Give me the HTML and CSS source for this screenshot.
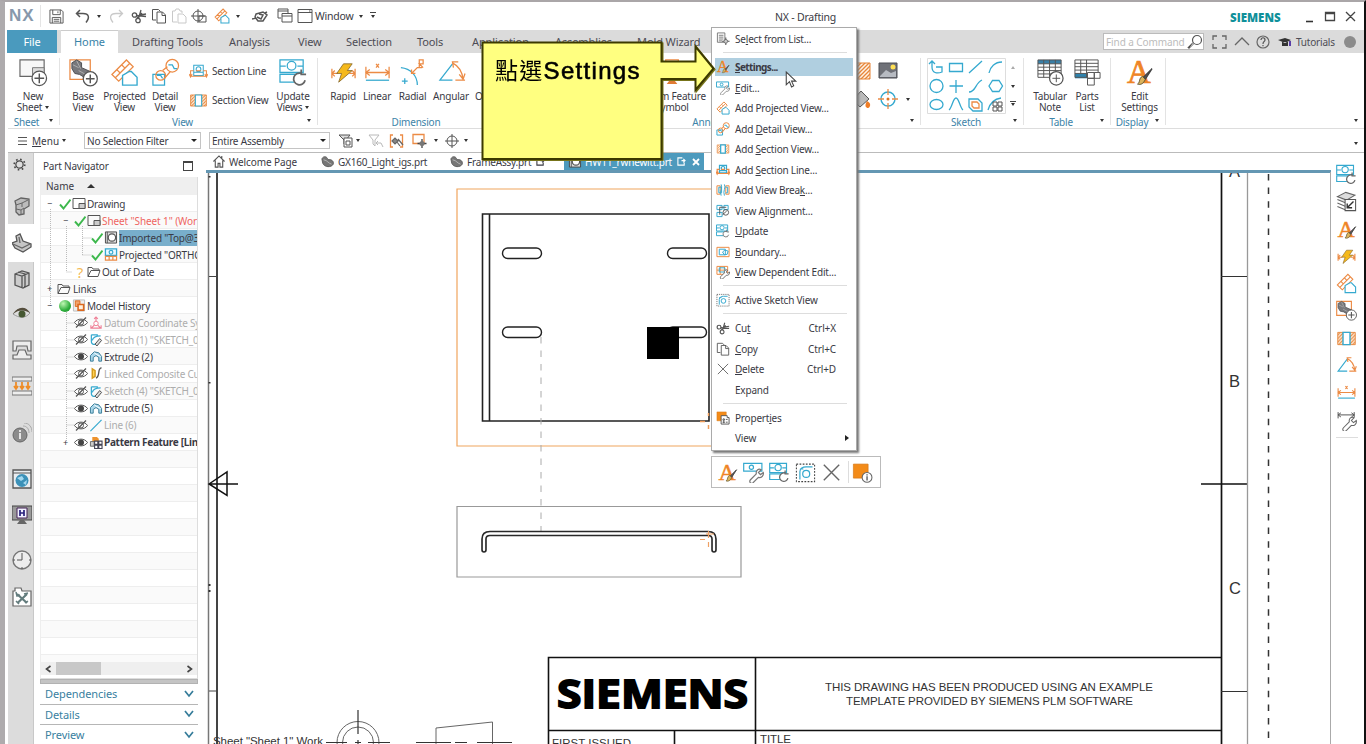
FILE: index.html
```html
<!DOCTYPE html>
<html lang="en">
<head>
<meta charset="utf-8">
<title>NX - Drafting</title>
<link rel="stylesheet" href="styles.css">
</head>
<body>
<svg class="defs" aria-hidden="true">
  <defs>
    <pattern id="hatch" width="4" height="4" patternUnits="userSpaceOnUse"><rect width="4" height="4" fill="#fff3e6"/><path d="M-1 5L5-1M-1 1L1-1M3 5L5 3" stroke="#e8863a" stroke-width="1.3"/></pattern>
  </defs>
  <symbol id="save" viewBox="0 0 16 16"><g class="k"><path d="M1 1h12l2 2v12H1z"/><path d="M4 1v5h8V1M3.500 15V9h9v6M5 11h6M5 13h6M9.500 2.500v2"/></g></symbol>
  <symbol id="undo" viewBox="0 0 16 16"><path class="k" d="M5 2L1.500 5.500 5 9M2 5.500h6c6 0 7 4 3 9" stroke-width="1.500"/></symbol>
  <symbol id="redo" viewBox="0 0 16 16"><path d="M11 2l3.500 3.500L11 9M14 5.500H8c-6 0-7 4-3 9" fill="none" stroke="#c9c9c9" stroke-width="1.300"/></symbol>
  <symbol id="cut" viewBox="0 0 16 16"><g class="k" stroke-width="1.300"><circle cx="3.500" cy="7" r="2.200"/><circle cx="7" cy="12.500" r="2.200"/><path d="M5.500 7.500L15 8.500M7.500 10.500L10 2M9 7l6-1M6 10L11 5"/></g></symbol>
  <symbol id="copy" viewBox="0 0 16 16"><g class="k"><path d="M5 12H1.500V1.500h6l2 2"/><path d="M6 4h5.500l3 3v8H6z" fill="#fff"/><path d="M11 4v3.500h3.500"/></g></symbol>
  <symbol id="paste" viewBox="0 0 16 16"><g fill="none" stroke="#c9c9c9"><path d="M6 14H1.500V3H4l1-2h3l1 2h2v2"/><path d="M7 6h5l3 3v6H7z" fill="#fff"/></g></symbol>
  <symbol id="target" viewBox="0 0 16 16"><g class="k"><circle cx="8" cy="8" r="5"/><path d="M8 1v14M1 8h14"/></g></symbol>
  <symbol id="repeat" viewBox="0 0 16 16"><g class="k"><circle cx="7" cy="8" r="5"/><path d="M7 1v14M0 8h14M8 8h7v6H8z"/></g></symbol>
  <symbol id="touch" viewBox="0 0 16 16"><path class="k" d="M0 11l4-1M4 6l7-2 4 3-4 6H6L3 9zM7 6l4 1-2 4-4-2M13 5l2-1" stroke-width="1.500"/></symbol>
  <symbol id="cascade" viewBox="0 0 16 16"><g class="k"><path d="M4 10H1V1h10v4M1 3h10"/><path d="M5 5.500h10V14H5zM5 8h10"/></g></symbol>
  <symbol id="window" viewBox="0 0 16 16"><path class="k" d="M1 1.500h14v13H1zM1 4.500h14M12 3h1.500"/></symbol>

  <symbol id="sheet" viewBox="0 0 30 30"><path d="M1 2h25v17H1z" fill="#f7f7f7" stroke="#666" stroke-width="1.200"/><path d="M14 10h12v9H14z" fill="#ddd" stroke="#777"/><circle cx="21" cy="21" r="7.500" fill="#fff" stroke="#555" stroke-width="1.300"/><path class="k" d="M16 21h10M21 16v10" stroke-width="1.500"/></symbol>
  <symbol id="base" viewBox="0 0 30 30"><path class="o" d="M1 2h21v20H1z"/><path d="M3 5l5-3 5 3v5l9 4 1 5-4 3-8-5-5-1-3-5z" fill="#77787c" stroke="#4e4f52"/><path d="M4 7l6 3M8 3l4 8M10 13l9 5" stroke="#b5b5b5" stroke-width=".9"/><circle cx="22" cy="21.500" r="7.300" fill="#fff" stroke="#555" stroke-width="1.300"/><path class="k" d="M17.500 21.500h9M22 17v9" stroke-width="1.500"/></symbol>
  <symbol id="proj" viewBox="0 0 30 30"><path class="o" d="M2 17L17 2l7 7L9 24zM5.500 20.500l15-15M7 12l3.500 3.500M12 7l3.500 3.500"/><path d="M13 28V18l7-4h2l6 6v8z" fill="#fff" class="bf"/></symbol>
  <symbol id="detail" viewBox="0 0 30 30"><path class="b" d="M2 17h12v11H2z"/><circle class="o" cx="22" cy="8" r="6.500"/><circle class="o" cx="10" cy="18" r="5"/><path class="o" d="M12 13l5-4M14 21l6-7"/><path class="b" d="M18 7h4l2 4h3M6 18h4l2 3"/></symbol>
  <symbol id="secline" viewBox="0 0 24 20"><path class="b" d="M6 2h12v13H6zM6 11h12"/><circle class="b" cx="12" cy="7" r="3"/><path class="o" d="M6 9H2v7h20V9h-4M0 13l2 4 2-4M20 13l2 4 2-4M9 9h6"/></symbol>
  <symbol id="secview" viewBox="0 0 24 20"><path d="M2 3h20v14H2z" fill="url(#hatch)" stroke="#e58235"/><path d="M8 3h8v14H8z" fill="#fff" class="bf"/></symbol>
  <symbol id="update" viewBox="0 0 30 30"><path class="b" d="M1 2h24v13H1zM1 17h24v8H1zM1 8.500h6m12 0h6"/><circle class="b" cx="13" cy="8" r="4.500"/><circle cx="21.500" cy="22" r="6.500" fill="#fff"/><path d="M27 23a6 6 0 1 1-4-7M23 12v5h5" fill="none" stroke="#666" stroke-width="1.800"/></symbol>
  <symbol id="bolt" viewBox="0 0 30 30"><path class="o" d="M3 11v10M27 11v10M3 16h6M21 16h6M6 13l-3 3 3 3M24 13l3 3-3 3"/><path d="M15 6h9l-5 7h5L10 25l3-9H8z" fill="#f5b91c" stroke="#806026" stroke-width=".8"/></symbol>
  <symbol id="linear" viewBox="0 0 30 30"><path class="o" d="M3 9v12M27 9v12M3 15h24M7 12l-4 3 4 3M23 12l4 3-4 3M13.500 6l3 4M16.500 6l-3 4"/><path class="b" d="M3 23h24" stroke-width="1.500"/></symbol>
  <symbol id="radial" viewBox="0 0 30 30"><path class="b" d="M3 10c10 1 17 8 17 18M4 24h6M7 21v6" stroke-width="1.500"/><path class="o" d="M14 16l6-6h5M14 12v4h4M22 10V2h4v4h-4l4 4"/></symbol>
  <symbol id="angular" viewBox="0 0 30 30"><path class="b" d="M16 6L3 23h13" stroke-width="1.600"/><path class="o" d="M16 5c6 3 10 9 11 17M17 10l-1-6 6 0M23 17l4 5 2-6M19 23h10" stroke-width="1.400"/></symbol>
  <symbol id="tabnote" viewBox="0 0 30 30"><path d="M2 3h24v17H2z" fill="#fff"/><path d="M2 2h24v4H2z" fill="#397fa7"/><path class="k" d="M2 2h24v18H2zM2 6h24M2 9.500h24M2 13h24M2 16.500h24M8 2v18M14 2v18M20 2v18"/><circle cx="21" cy="21" r="7" fill="#fff" stroke="#555" stroke-width="1.300"/><path class="k" d="M17 21h8M21 17v8"/></symbol>
  <symbol id="parts" viewBox="0 0 30 30"><path d="M2 16h16v5H2z" fill="#2e82ac"/><path class="k" d="M2 2h24v18H2zM2 5.500h24M2 9h24M2 12.500h24M2 16h24M8 2v14M14 2v18"/><path d="M15 15h7v6h-7zM22 15h6v6h-6zM15 21h7v7h-7z" fill="#fff" stroke="#555"/></symbol>
  <symbol id="seta" viewBox="0 0 30 30"><text x="2" y="25.500" class="serif-a">A</text><path d="M28 11L19 20l2 2z" fill="#555" stroke="#444" stroke-width="1.300"/><path d="M18 19l3 3c-2 5-5 6-8 5 3-2 1-6 5-8z" fill="#dcb45c" stroke="#5d5334"/></symbol>
  <symbol id="editw" viewBox="0 0 30 30"><path class="b" d="M1 2h26v11H1z"/><circle class="b" cx="12" cy="7.500" r="3"/><path d="M11 25l8-8c-1-5 3-8 7-6l-4 4 3 3 4-3c1 5-3 8-7 7l-8 8c-3 2-6-2-3-5z" fill="#fff" stroke="#777" stroke-width="1.700"/></symbol>
  <symbol id="wrench" viewBox="0 0 30 30"><path class="k" d="M3 3v9M26 3v7M3 7h23M7 4L3 7l4 3M22 4l4 3-4 3" stroke-width="1.400"/><path d="M11 25l8-8c-1-5 3-8 7-6l-4 4 3 3 4-3c1 5-3 8-7 7l-8 8c-3 2-6-2-3-5z" fill="#fff" stroke="#666" stroke-width="1.500"/></symbol>
  <symbol id="active" viewBox="0 0 30 30"><path d="M2 3h26v25H2z" fill="none" stroke="#444" stroke-width="1.500" stroke-dasharray="2.500 2"/><circle class="b" cx="16" cy="17" r="5"/><path class="b" d="M7 25V14c0-5 4-7 9-7h9M7 10h5"/></symbol>
  <symbol id="del" viewBox="0 0 30 30"><path d="M4 4l22 22M26 4L4 26" fill="none" stroke="#666" stroke-width="2"/></symbol>
  <symbol id="prop" viewBox="0 0 30 30"><path d="M2 3h21v20H2z" fill="#f38b18" stroke="#d77a18"/><circle cx="21.500" cy="22" r="7" fill="#fff" stroke="#666" stroke-width="1.500"/><path d="M21.500 20.500v6M21.500 17.500v1.800" stroke="#555" stroke-width="1.900"/></symbol>
  <symbol id="propm" viewBox="0 0 30 30"><path d="M2 2h20v19H2z" fill="#f38b18" stroke="#d77a18"/><path d="M11 14V10h13v4h4v14H11z" fill="#fff" stroke="#555" stroke-width="2"/><path d="M15 17h3v3h-3zM15 23h3v2h-3zM21 18h4M21 24h4" fill="none" stroke="#555" stroke-width="2"/></symbol>
  <symbol id="sellist" viewBox="0 0 30 30"><path d="M3 2h16v20H3zM6 7h10M6 11h10M6 15h10M6 19h7" fill="none" stroke="#777" stroke-width="2"/><path d="M21 12v16M13 20h16" stroke="#555" stroke-width="2.200"/><circle cx="21" cy="20" r="4" fill="#ccc" stroke="#555" stroke-width="1.500"/></symbol>
  <symbol id="break" viewBox="0 0 30 30"><path class="o" d="M2 6h7v18H2zM21 6h7v18h-7z"/><path class="b" d="M11 3c4 7-4 14 0 24M18 3c4 7-4 14 0 24M6 9h6v12H6zM21 9h4v12h-4"/></symbol>
  <symbol id="align" viewBox="0 0 30 30"><path class="b" d="M2 3h11v9H2zM2 18h11v9H2zM17 3h9v9h-9z"/><circle class="k" cx="21" cy="18" r="6" stroke-width="2"/><path class="k" d="M8 7h14M8 7v16M14 23l9-8" stroke-width="2"/></symbol>
  <symbol id="boundary" viewBox="0 0 30 30"><path class="o" d="M2 5h26v20H2z"/><path class="b" d="M7 9h13v12H7zM14 15l5-4 7 2-2 7-6 1z"/></symbol>
  <symbol id="depend" viewBox="0 0 30 30"><path class="o" d="M2 3h23v17H2zM2 11h23M9 3v17M18 3v17"/><path class="b" d="M7 6h12v9H7z"/><path d="M10 25l8-8c-1-5 3-8 7-6l-3 4 3 3 4-3c1 5-3 8-7 7l-8 8c-3 2-6-2-4-5z" fill="#fff" stroke="#666" stroke-width="2"/></symbol>

  <symbol id="check" viewBox="0 0 12 12"><path d="M1 6.500L4.500 10.500 11.500 1.500" fill="none" stroke="#3db84d" stroke-width="1.900"/></symbol>
  <symbol id="sheeti" viewBox="0 0 14 12"><path class="k" d="M1 1h12v10H1z"/><path d="M7 6h6v5H7z" fill="#ccc" stroke="#555"/></symbol>
  <symbol id="imported" viewBox="0 0 14 14"><path d="M1 1h12v12H1z" fill="#ddd" stroke="#444"/><circle cx="8" cy="7" r="4" fill="#fff" stroke="#555" stroke-width="1.300"/><path class="k" d="M3 1v12"/></symbol>
  <symbol id="projected" viewBox="0 0 14 14"><path d="M1 1h12v7H1z" fill="#eaf8ff" stroke="#35a9cf" stroke-width="1.400"/><circle class="b" cx="7" cy="4.500" r="2"/><path class="o" d="M1 9h12v4H1zM5 9v4M9 9v4"/></symbol>
  <symbol id="folder" viewBox="0 0 14 12"><path class="k" d="M1 11V2h4l1 1.500h6V5M1 11L4 5h9l-2 6z"/></symbol>
  <symbol id="model" viewBox="0 0 14 14"><path d="M1 1h12v12H1z" fill="#eee" stroke="#bbb"/><path d="M3 2h5v6H3z" fill="#f3a46c" stroke="#dc681e"/><path d="M6 6h6v6H6z" fill="#fff1df" stroke="#dc681e" stroke-width="1.700"/></symbol>
  <symbol id="eye" viewBox="0 0 14 12"><path d="M.5 6c3-4.500 10-4.500 13 0-3 4.500-10 4.500-13 0z" fill="#fff" stroke="#555"/><circle cx="7" cy="6" r="3" fill="#444"/></symbol>
  <symbol id="hide" viewBox="0 0 14 12"><path d="M.5 6c3-4.500 10-4.500 13 0-3 4.500-10 4.500-13 0z" fill="#fff" stroke="#555"/><circle cx="7" cy="6" r="2.500" fill="none" stroke="#555"/><path class="k" d="M2 11L12 1" stroke-width="1.200"/></symbol>
  <symbol id="csys" viewBox="0 0 14 14"><path d="M7 8V1M7 8l-5 5M7 8l5 5M5 3l2-2 2 2M1.500 10v3h11v-3" fill="none" stroke="#ef7f96" stroke-width="1.200"/><circle cx="7" cy="8" r="2.400" fill="#fff" stroke="#ef7f96"/></symbol>
  <symbol id="sketchi" viewBox="0 0 14 14"><path class="b" d="M2 2h7M2 2v7c0 4 4 4 6 2M3 8c1-4 4-5 9-5"/><path d="M6 12l5-6 2 2-5 6z" fill="#ddd" stroke="#444"/></symbol>
  <symbol id="extrude" viewBox="0 0 14 14"><path d="M1 6l4-4 5 1 3 4v5h-3V8L7 6 4 8v4H1z" fill="#a9d6ea" stroke="#347994"/><path d="M5 3l3 2 4 2" stroke="#fff" fill="none"/></symbol>
  <symbol id="curve" viewBox="0 0 14 14"><path d="M3 2l3 2v6L3 12z" fill="#ffd455" stroke="#d49b1e" stroke-width="1.600"/><path class="k" d="M13 1c-5 0-1 9-6 11" stroke-width="1.400"/></symbol>
  <symbol id="line" viewBox="0 0 14 14"><path class="b" d="M1 13L13 1"/></symbol>
  <symbol id="pattern" viewBox="0 0 14 14"><path d="M3 1h5l2 2v5H3z" fill="#ee932d"/><path d="M1 6h4v5H1z" fill="#ccc" stroke="#666"/><path d="M5.500 5.500h3.500v3.500H5.500zM10 5.500h3.500v3.500H10zM5.500 10h3.500v3.500H5.500zM10 10h3.500v3.500H10z" fill="#fff" stroke="#454555" stroke-width="1.200"/></symbol>
  <symbol id="blob" viewBox="0 0 16 14"><path d="M1 4c2-4 6-3 7 1 4-1 7 2 6 5-2 4-10 4-12-1z" fill="#777" stroke="#595959"/><path d="M3 5c5 1 5 4 9 5" fill="none" stroke="#bbb"/></symbol>
  <symbol id="home" viewBox="0 0 14 14"><path class="k" d="M1 7l6-6 6 6M3 6v7h3V9h2v4h3V6M10 1v3" stroke-width="1.200"/></symbol>
  <symbol id="edit" viewBox="0 0 10 10"><path d="M6 1H1v8h7V6M5 4h4M7 2l2 2-2 2" fill="none" stroke="currentColor" stroke-width="1.200"/></symbol>

  <symbol id="gear" viewBox="0 0 16 16"><circle cx="8" cy="8" r="4.500" fill="none" stroke="#444" stroke-width="1.500"/><circle cx="8" cy="8" r="6.500" fill="none" stroke="#444" stroke-width="2" stroke-dasharray="2 3.100"/></symbol>
  <symbol id="assem" viewBox="0 0 20 20"><path d="M3 5l6-3 8 1v7l-5 3v5l-5 1-3-3V9z" fill="#bcbcbc" stroke="#616161" stroke-width="1.300"/><path d="M4 9l6-2 6-3M10 7v4M4 13l5 1 3-2M9 14v5" fill="none" stroke="#666"/></symbol>
  <symbol id="partnav" viewBox="0 0 20 20"><path d="M4 3l4-2 3 7 8 3v3l-8 5-8-4-3-5 5-2z" fill="#c5c5c5" stroke="#555" stroke-width="1.300"/><path d="M1 11l9 4 8-4M7 4l1 6" fill="none" stroke="#666" stroke-width="1.300"/></symbol>
  <symbol id="books" viewBox="0 0 20 20"><path d="M3 5l7-3 7 2v12l-6 3-8-3zM3 5l7 2 7-3M10 7v12M6 3l7 2v13" fill="#ccc" stroke="#555" stroke-width="1.300"/></symbol>
  <symbol id="eyeb" viewBox="0 0 20 20"><path d="M1 11c5-7 13-7 17-1-5 6-11 5-17 1z" fill="#ddd" stroke="#999"/><path d="M1 11c5-8 13-8 17-1-5-3-11-4-17 1z" fill="#554e3d"/><circle cx="10" cy="11" r="3.500" fill="#465832"/></symbol>
  <symbol id="die" viewBox="0 0 20 20"><path d="M1 1h18v10h-3l-1-5H5l-1 5H1zM1 19v-4h4l2-5h6l2 5h4v4z" fill="#ededed" stroke="#666" stroke-width="1.200"/></symbol>
  <symbol id="process" viewBox="0 0 20 20"><path d="M0 1h20v4H0zM0 15h20v4H0z" fill="#eee" stroke="#777" stroke-width="1.200"/><path d="M4 6v7M10 6v7M16 6v7M2 10l2 3 2-3M8 10l2 3 2-3M14 10l2 3 2-3" fill="none" stroke="#ee8c26" stroke-width="1.800"/></symbol>
  <symbol id="info" viewBox="0 0 20 20"><circle cx="8" cy="12" r="7" fill="#8b8b8b" stroke="#666"/><path d="M8 10v6M8 7v2" stroke="#eee" stroke-width="1.800"/><path d="M11 3c4 0 6 3 6 7M12 0c5 0 8 4 8 9" fill="none" stroke="#aaa"/></symbol>
  <symbol id="web" viewBox="0 0 20 20"><path d="M1 1h18v18H1z" fill="#e9edf0" stroke="#555" stroke-width="1.300"/><path class="k" d="M1 4h18"/><circle cx="10" cy="11.500" r="6.500" fill="#3b91b8"/><path d="M5 9l5-2 2 3-3 2zM11 14l4-3-1 5z" fill="#a3d8ef"/></symbol>
  <symbol id="hd3d" viewBox="0 0 20 20"><path d="M0 1h20v14H0z" fill="#999" stroke="#444"/><path d="M5 3h10v10H5z" fill="#f1f1ff" stroke="#425"/><path d="M8 5v6M12 5v6M8 8h4" stroke="#28207c" stroke-width="1.700"/><path d="M8 15h4l3 4H5z" fill="#666"/></symbol>
  <symbol id="clock" viewBox="0 0 20 20"><circle cx="10" cy="10" r="9" fill="#eee" stroke="#777" stroke-width="1.400"/><path class="k" d="M10 3v7H5M1 10h2M17 10h2M10 17v2"/></symbol>
  <symbol id="tools" viewBox="0 0 20 20"><path d="M1 4h2V1h6l1 3h9v15H1z" fill="#fff" stroke="#666" stroke-width="1.200"/><path d="M5.500 16L15 7M5 7l10 9" stroke="#637c7d" stroke-width="2.200"/><path d="M4 5l1 4 3-1M12 7l4-1M4 14l3 3M13 16l3-2" stroke="#637c7d" fill="none" stroke-width="1.500"/></symbol>
  <symbol id="layers" viewBox="0 0 30 30"><path d="M2 8l12-6 13 4-12 7zM2 12l12 5 12-5M2 17l12 5M2 22l12 5" fill="#ddd" stroke="#666" stroke-width="1.500"/><path d="M13 12h15v16H13z" fill="#fff" stroke="#555" stroke-width="1.500"/><path d="M25 15l-9 9M16 18v6h7" fill="none" stroke="#333" stroke-width="2"/></symbol>
  <symbol id="filter" viewBox="0 0 16 16"><path d="M1 2h11L8 7v6l-2-2V7z" fill="#ddd" stroke="#555"/><path d="M6 5h8v9H6zM8 8h4v4H8z" fill="#fff" stroke="#555"/></symbol>
  <symbol id="filter2" viewBox="0 0 16 16"><path d="M1 2h10L7 7v6l-2-2V7zM8 10h5l2 4M10 8l-2 2 2 2" fill="none" stroke="#b9b9b9"/></symbol>
  <symbol id="pick" viewBox="0 0 16 16"><path class="o" d="M4 2H1.500v12H4M11 2h2.500v12H11"/><path d="M3 8l3-3 3 3-3 3zM9 6l5 6M8 9l3 4" fill="#888" stroke="#666" stroke-width="1.200"/></symbol>
  <symbol id="box" viewBox="0 0 16 16"><path class="o" d="M1 1.500h11v9H1z"/><path d="M10 6v9M5.500 10.500h9" stroke="#444" stroke-width="1.300"/><circle cx="10" cy="10.500" r="2.500" fill="#777"/></symbol>
</svg>

<div class="app">
  <header class="titlebar">
    <div class="quick">
      <b class="nx">NX</b>
      <svg class="s16 q1"><use href="#save"/></svg>
      <svg class="s16 q2"><use href="#undo"/></svg><i class="tri"></i>
      <svg class="s16 q3"><use href="#redo"/></svg>
      <svg class="s16 q4"><use href="#cut"/></svg>
      <svg class="s16 q5"><use href="#copy"/></svg>
      <svg class="s16 q5"><use href="#paste"/></svg>
      <svg class="s16 q5"><use href="#repeat"/></svg>
      <svg class="s16 q6"><use href="#proj"/></svg><i class="tri"></i>
      <svg class="s16 q7"><use href="#touch"/></svg>
      <svg class="s16 q8"><use href="#cascade"/></svg>
      <svg class="s16 q9"><use href="#window"/></svg>
      <span class="winlabel">Window</span><i class="tri"></i><i class="tri bar"></i>
    </div>
    <div class="apptitle">NX - Drafting</div>
    <div class="brand">SIEMENS</div>
    <svg class="wctl" viewBox="0 0 54 16"><path d="M1 13.500h7" stroke="#333" stroke-width="1.600"/><path d="M20.500 4.500h9v8h-9zM20 5.500h10M41 4l9 9M50 4l-9 9" fill="none" stroke="#444" stroke-width="1.300"/></svg>
  </header>

  <nav class="tabs">
    <span class="file">File</span><span class="home">Home</span>
    <span class="t1">Drafting Tools</span><span class="t2">Analysis</span><span class="t3">View</span><span class="t4">Selection</span><span class="t5">Tools</span><span class="t6">Application</span><span class="t7">Assemblies</span><span class="t8">Mold Wizard</span><span class="t9">Die Design</span>
    <div class="find"><span>Find a Command</span><svg viewBox="0 0 16 16"><circle cx="10" cy="6" r="4.500" fill="none" stroke="#555" stroke-width="1.200"/><path d="M7 9.500l-5 5M6 8.500l-5 5 1 1" stroke="#666"/></svg></div>
    <svg class="tabicons" viewBox="0 0 62 18"><path d="M2 7V3h4M11 3h4v4M15 11v4h-4M6 15H2v-4M24 12l7-7 7 7" fill="none" stroke="#666" stroke-width="1.300"/><circle cx="52" cy="9" r="6" fill="none" stroke="#666" stroke-width="1.200"/><path d="M50 7c0-3 4-3 4 0 0 2-2 1-2 4M52 12v1.300" fill="none" stroke="#555" stroke-width="1.200"/></svg>
    <svg class="cap" viewBox="0 0 14 12"><path d="M0 4l7-2 6 2-6 3zM4 6v4h6V6" fill="#333"/><path d="M11 5v5h2V5" fill="#593da8"/></svg>
    <span class="tut">Tutorials</span><i class="user"></i>
  </nav>

  <section class="ribbon">
    <div class="group g-sheet"><div class="cmds"><div class="cmd"><svg><use href="#sheet"/></svg><span>New<br>Sheet<i class="tri"></i></span></div></div><div class="gl">Sheet<i class="tri"></i></div></div>
    <div class="group g-view"><div class="cmds">
      <div class="cmd w42"><svg><use href="#base"/></svg><span>Base<br>View</span></div>
      <div class="cmd w41"><svg><use href="#proj"/></svg><span>Projected<br>View</span></div>
      <div class="cmd w40"><svg><use href="#detail"/></svg><span>Detail<br>View</span></div>
      <div class="stack"><div><svg><use href="#secline"/></svg>Section Line</div><div><svg><use href="#secview"/></svg>Section View</div></div>
      <div class="cmd w40"><svg><use href="#update"/></svg><span>Update<br>Views<i class="tri"></i></span></div>
    </div><div class="gl">View<i class="tri"></i></div></div>
    <div class="group g-dim"><div class="cmds">
      <div class="cmd w36"><svg><use href="#bolt"/></svg><span>Rapid</span></div>
      <div class="cmd w32"><svg><use href="#linear"/></svg><span>Linear</span></div>
      <div class="cmd w39"><svg><use href="#radial"/></svg><span>Radial</span></div>
      <div class="cmd w38"><svg><use href="#angular"/></svg><span>Angular</span></div>
      <div class="cmd w50"><svg></svg><span>Ordinate</span></div>
    </div><div class="gl">Dimension</div></div>
    <div class="group g-ann"><div class="cmds">
      <div class="cmd datum"><svg viewBox="0 0 30 30"><path class="o" d="M8 2h13v11H8zM14.500 13v9"/><path d="M9 27h11l-5.500-7z" fill="#e07c35"/></svg><span>Datum Feature<br>Symbol</span></div>
      <div class="anngrid">
        <svg viewBox="0 0 22 22"><path d="M3 3h15v16H3z" fill="url(#hatch)" stroke="#e58235"/></svg>
        <svg viewBox="0 0 22 22"><path d="M2 3h18v15H2z" fill="#6f7178" stroke="#4c4e55"/><path d="M3 16l6-6 5 3 5-2v6H3z" fill="#b7bbc2"/><circle cx="16" cy="7" r="2.500" fill="#ffe055"/></svg><i></i>
        <svg viewBox="0 0 22 22"><path d="M1 12L9 3l8 8-9 8z" fill="#bbb" stroke="#555"/><path d="M15 13c5 2 3 7 1 7s-4-2-1-7z" fill="#ef7c24"/></svg>
        <svg viewBox="0 0 22 22"><circle cx="11" cy="11" r="7" fill="none" stroke="#35a9cf" stroke-width="1.400"/><path class="o" d="M11 1v6M11 15v6M1 11h6M15 11h6"/><circle cx="11" cy="11" r="1.500" fill="#df7020"/></svg><i class="tri"></i>
      </div>
    </div><div class="gl">Annotation<i class="tri"></i></div></div>
    <div class="group g-sk"><div class="cmds">
      <svg class="skbox" viewBox="0 0 79 56"><path d="M.5.500h78v55H.5z" fill="#fff" stroke="#ddd"/><g class="b"><path d="M5 3v6c0 6 5 7 10 5V9H9M2 6l3-3 3 3M22.500 5.500h13v8h-13zM42 15L55 3M62 15c1-6 6-11 13-11"/><circle cx="9.500" cy="28" r="6.500"/><path d="M29 22v13M22.500 28H36M42 34c7 0 6-9 13-12M62 28l3.500-5.500h6.500l3.500 5.500-3.500 5.500h-6.500z"/><ellipse cx="9.500" cy="46.500" rx="6.500" ry="5"/><path d="M22 52c3-2 4-12 7-12s4 10 7 12M42 41h9l4 4v8h-9l-4-4zM61 52c2-7 6-11 13-12"/></g><path class="o" d="M45 44h5l2 2v4h-5l-2-2z"/><path d="M66 44h4v4h-4zM71 44h4v4h-4zM66 49h4v4h-4zM71 49h4v4h-4z" fill="#fff" stroke="#555"/></svg>
      <div class="skscroll"><i class="tri up"></i><i class="tri"></i><i class="tri bar"></i></div>
    </div><div class="gl">Sketch<i class="tri"></i></div></div>
    <div class="group g-tab"><div class="cmds"><div class="cmd w42"><svg><use href="#tabnote"/></svg><span>Tabular<br>Note</span></div><div class="cmd w32"><svg><use href="#parts"/></svg><span>Parts<br>List</span></div></div><div class="gl">Table<i class="tri"></i></div></div>
    <div class="group g-disp"><div class="cmds"><div class="cmd w55"><svg><use href="#seta"/></svg><span>Edit<br>Settings</span></div></div><div class="gl">Display<i class="tri"></i></div></div>
    <i class="tri ribend"></i>
  </section>

  <section class="selbar">
    <svg class="burger" viewBox="0 0 10 10"><path d="M0 1.500h9M0 5h9M0 8.500h9" stroke="#555"/></svg>
    <span class="menu"><u>M</u>enu</span><i class="tri"></i>
    <div class="combo c1">No Selection Filter<i class="tri"></i></div>
    <div class="combo c2">Entire Assembly<i class="tri"></i></div>
    <svg class="s16 x1"><use href="#filter"/></svg><i class="tri"></i>
    <svg class="s16 x2"><use href="#filter2"/></svg>
    <svg class="s16 x3"><use href="#pick"/></svg>
    <svg class="s16 x4"><use href="#box"/></svg><i class="tri x5"></i>
    <svg class="s16 x6"><use href="#target"/></svg><i class="tri x7"></i>
    <i class="tri selend"></i>
  </section>

  <main class="main">
    <aside class="resource">
      <svg class="r0"><use href="#gear"/></svg><svg class="r1"><use href="#assem"/></svg>
      <span class="cur"><svg><use href="#partnav"/></svg></span>
      <svg class="r2"><use href="#books"/></svg><svg class="r3"><use href="#eyeb"/></svg><svg class="r4"><use href="#die"/></svg><svg class="r5"><use href="#process"/></svg><svg class="r6"><use href="#info"/></svg><svg class="r7"><use href="#web"/></svg><svg class="r8"><use href="#hd3d"/></svg><svg class="r9"><use href="#clock"/></svg><svg class="r10"><use href="#tools"/></svg>
    </aside>

    <aside class="navigator">
      <div class="navhead"><span>Part Navigator</span><i></i></div>
      <div class="tree">
        <div class="thead">Name<i></i></div>
        <div class="rows">
          <div class="row d0"><em>−</em><svg class="ck"><use href="#check"/></svg><svg><use href="#sheeti"/></svg><span>Drawing</span></div>
          <div class="row d1"><em>−</em><svg class="ck"><use href="#check"/></svg><svg><use href="#sheeti"/></svg><span class="red">Sheet "Sheet 1" (Wor</span></div>
          <div class="row d2"><em></em><svg class="ck"><use href="#check"/></svg><svg><use href="#imported"/></svg><span class="sel">Imported "Top@3"</span></div>
          <div class="row d2"><em></em><svg class="ck"><use href="#check"/></svg><svg><use href="#projected"/></svg><span>Projected "ORTHO"</span></div>
          <div class="row d1"><em></em><b class="ck q">?</b><svg><use href="#folder"/></svg><span>Out of Date</span></div>
          <div class="row d0"><em>+</em><svg class="fold"><use href="#folder"/></svg><span>Links</span></div>
          <div class="row d0"><em>−</em><b class="ball"></b><svg><use href="#model"/></svg><span>Model History</span></div>
          <div class="row d1 f"><em></em><svg><use href="#hide"/></svg><svg><use href="#csys"/></svg><span>Datum Coordinate Sy</span></div>
          <div class="row d1 f"><em></em><svg><use href="#hide"/></svg><svg><use href="#sketchi"/></svg><span>Sketch (1) "SKETCH_0</span></div>
          <div class="row d1"><em></em><svg><use href="#eye"/></svg><svg><use href="#extrude"/></svg><span>Extrude (2)</span></div>
          <div class="row d1 f"><em></em><svg><use href="#hide"/></svg><svg><use href="#curve"/></svg><span>Linked Composite Cu</span></div>
          <div class="row d1 f"><em></em><svg><use href="#hide"/></svg><svg><use href="#sketchi"/></svg><span>Sketch (4) "SKETCH_0</span></div>
          <div class="row d1"><em></em><svg><use href="#eye"/></svg><svg><use href="#extrude"/></svg><span>Extrude (5)</span></div>
          <div class="row d1 f"><em></em><svg><use href="#hide"/></svg><svg><use href="#line"/></svg><span>Line (6)</span></div>
          <div class="row d1 bold"><em>+</em><svg><use href="#eye"/></svg><svg><use href="#pattern"/></svg><span>Pattern Feature [Lin</span></div>
          <svg class="guides" viewBox="0 0 158 255"><path d="M9.500 14v97M25.500 31v46h6M41.500 31v29M41.500 43h10M41.500 60h10M25.500 115v132M25.500 128h7M25.500 145h7M25.500 162h7M25.500 179h7M25.500 196h7M25.500 213h7M25.500 230h7" fill="none" stroke="#bbb" stroke-dasharray="1 1"/></svg>
        </div>
        <div class="scroll"><svg viewBox="0 0 8 8"><path d="M6 1L2 4l4 3" fill="none" stroke="#444" stroke-width="1.600"/></svg><i></i><svg class="rt" viewBox="0 0 8 8"><path d="M2 1l4 3-4 3" fill="none" stroke="#444" stroke-width="1.600"/></svg></div>
      </div>
      <div class="splitter"></div>
      <div class="acc">Dependencies<svg viewBox="0 0 10 8"><path d="M1 1l4 5 4-5"/></svg></div>
      <div class="acc">Details<svg viewBox="0 0 10 8"><path d="M1 1l4 5 4-5"/></svg></div>
      <div class="acc">Preview<svg viewBox="0 0 10 8"><path d="M1 1l4 5 4-5"/></svg></div>
    </aside>

    <section class="center">
      <div class="docs">
        <div class="doc dd1"><svg><use href="#home"/></svg>Welcome Page</div>
        <div class="doc dd2"><svg><use href="#blob"/></svg>GX160_Light_igs.prt</div>
        <div class="doc dd3"><svg><use href="#blob"/></svg>FrameAssy.prt<svg class="ed"><use href="#edit"/></svg></div>
        <div class="doc dd4"><svg><use href="#imported"/></svg><span>HW11_rwhewitt.prt</span><svg class="ed"><use href="#edit"/></svg><svg class="cl" viewBox="0 0 8 8"><path d="M1 1l6 6M7 1L1 7" stroke="#fff" stroke-width="1.800"/></svg></div>
      </div>
      <svg class="canvas" viewBox="206 173 1125 571">
        <rect x="206" y="173" width="1125" height="571" fill="#fff"/>
        <path d="M208.500 173v571" stroke="#777" stroke-width="1.500"/><path d="M217 173v571" stroke="#444" stroke-width="2"/>
        <path d="M209 276.500h8M209 691h8" stroke="#444"/><path d="M209.500 176v1.500M209.500 382v1.500M209.500 584v2M209.500 590v2" stroke="#333" stroke-width="2"/>
        <path d="M209 484h29M209 484l18-12v23.500z" fill="none" stroke="#111" stroke-width="1.500"/>
        <path d="M1201 484h46M1221.500 173v571" stroke="#111" stroke-width="1.700"/><path d="M1247.500 173v571" stroke="#999" stroke-width="1.300"/><path d="M1221 276.500h26M1221 691.500h26" stroke="#333"/>
        <path d="M1268.500 174v570" stroke="#333" stroke-width="1.500" stroke-dasharray="6.500 7.100"/>
        <g class="drawtext grid"><text x="1229" y="177">A</text><text x="1229" y="387">B</text><text x="1229" y="594">C</text></g>
        <path d="M457 189h284v257H457z" fill="none" stroke="#f0a55e" stroke-width="1.200"/>
        <path d="M482.500 214h226.500v207H482.500zM489.500 214v207" fill="none" stroke="#222" stroke-width="1.600"/>
        <g fill="none" stroke="#222" stroke-width="1.400"><rect x="502.500" y="248" width="39" height="10.500" rx="5.200"/><rect x="502.500" y="327" width="39" height="10.500" rx="5.200"/><rect x="667.500" y="248" width="39" height="10.500" rx="5.200"/><rect x="667.500" y="327" width="39" height="10.500" rx="5.200"/></g>
        <path d="M541 337v194" stroke="#aaa" stroke-dasharray="6.500 7"/>
        <path d="M700 421.500h5M708.500 413v3M708.500 425v4" stroke="#ef9c59" stroke-width="1.500"/>
        <rect x="647" y="327" width="32" height="32" fill="#000"/>
        <path d="M457 506.500h284V577H457z" fill="none" stroke="#999" stroke-width="1.200"/>
        <path d="M484 550v-11q0-5.500 6-5.500h218q6 0 6 5.500v11" fill="none" stroke="#292929" stroke-width="5.600" stroke-linecap="round"/><path d="M484 550v-11q0-5.500 6-5.500h218q6 0 6 5.500v11" fill="none" stroke="#fff" stroke-width="2.300" stroke-linecap="round"/>
        <path d="M700 539.500h5M708.500 531v7M708.500 542v5M706 534h8" stroke="#efa164" stroke-width="1.200"/>
        <g fill="none" stroke="#666"><circle cx="358" cy="742.500" r="21"/><circle cx="358" cy="742.500" r="15.500"/><path d="M436 744v-16l56.500-6v22"/></g>
        <path d="M358 710v24M358 740v4M326 742.500h21M355 742.500h6M368 742.500h22M416 742.500h35M455 742.500h12M477 742.500h35" stroke="#333" stroke-width="1.200"/>
        <path d="M1221 657.500H548.500V744M548.500 730.500H1221M755.500 657.500V744M674.500 730.500V744" fill="none" stroke="#111" stroke-width="1.600"/>
        <text class="logo" x="557" y="708" textLength="191" lengthAdjust="spacingAndGlyphs">SIEMENS</text>
        <g class="drawtext"><text x="825" y="691" textLength="328">THIS DRAWING HAS BEEN PRODUCED USING AN EXAMPLE</text><text x="846" y="705" textLength="287">TEMPLATE PROVIDED BY SIEMENS PLM SOFTWARE</text><text x="552" y="747" textLength="79">FIRST ISSUED</text><text x="760" y="743" textLength="31">TITLE</text><text x="213" y="745" textLength="110">Sheet "Sheet 1" Work</text></g>
      </svg>
    </section>

    <aside class="right">
      <svg><use href="#update"/></svg><svg><use href="#layers"/></svg><svg><use href="#seta"/></svg><svg><use href="#bolt"/></svg><svg><use href="#proj"/></svg><svg><use href="#base"/></svg><svg class="sv"><use href="#secview"/></svg><svg><use href="#angular"/></svg><svg><use href="#linear"/></svg><svg><use href="#wrench"/></svg><hr>
    </aside>
  </main>

  <div class="ctx">
    <div class="mi"><svg><use href="#sellist"/></svg><span>Se<u>l</u>ect from List...</span></div><hr>
    <div class="mi on"><svg><use href="#seta"/></svg><span><u>S</u>ettings...</span></div>
    <div class="mi"><svg><use href="#editw"/></svg><span><u>E</u>dit...</span></div>
    <div class="mi"><svg><use href="#proj"/></svg><span>Add Pro<u>j</u>ected View...</span></div>
    <div class="mi"><svg><use href="#detail"/></svg><span>Add <u>D</u>etail View...</span></div>
    <div class="mi"><svg><use href="#secview"/></svg><span>Add <u>S</u>ection View...</span></div>
    <div class="mi"><svg><use href="#secline"/></svg><span>Add <u>S</u>ection Line...</span></div>
    <div class="mi"><svg><use href="#break"/></svg><span>Add View Brea<u>k</u>...</span></div>
    <div class="mi"><svg><use href="#align"/></svg><span>View A<u>l</u>ignment...</span></div>
    <div class="mi"><svg><use href="#update"/></svg><span><u>U</u>pdate</span></div>
    <div class="mi"><svg><use href="#boundary"/></svg><span><u>B</u>oundary...</span></div>
    <div class="mi"><svg><use href="#depend"/></svg><span><u>V</u>iew Dependent Edit...</span></div><hr>
    <div class="mi"><svg><use href="#active"/></svg><span>Active Sketch View</span></div><hr>
    <div class="mi"><svg><use href="#cut"/></svg><span>Cu<u>t</u></span><kbd>Ctrl+X</kbd></div>
    <div class="mi"><svg><use href="#copy"/></svg><span><u>C</u>opy</span><kbd>Ctrl+C</kbd></div>
    <div class="mi"><svg><use href="#del"/></svg><span><u>D</u>elete</span><kbd>Ctrl+D</kbd></div>
    <div class="mi"><svg></svg><span>Expand</span></div><hr>
    <div class="mi"><svg><use href="#propm"/></svg><span>Propert<u>i</u>es</span></div>
    <div class="mi"><svg></svg><span>View</span><b></b></div>
  </div>

  <div class="mini">
    <svg><use href="#seta"/></svg><svg><use href="#editw"/></svg><svg><use href="#update"/></svg><svg><use href="#active"/></svg><svg><use href="#del"/></svg><i></i><svg><use href="#prop"/></svg>
  </div>

  <div class="callout">
    <svg viewBox="0 0 236 122"><path d="M1.500 1.500h179v19h34v-15l18 22-18 21.500V38h-34v80H1.500z" fill="#ffff80" stroke="#3c3a00" stroke-width="2"/></svg>
    <p><span>點選</span>Settings</p>
  </div>
  <svg class="pointer" viewBox="0 0 10 16"><path d="M1 1v12l3-3 2 5 2-1-2-4.500h4z" fill="#fff" stroke="#444"/></svg>
</div>
</body>
</html>
```
FILE: styles.css
```css
*{box-sizing:border-box}
body{margin:0;background:#fff;font-family:"Noto Sans","Noto Sans CJK TC",sans-serif;font-size:10px;letter-spacing:-.2px;color:#3a3a44;overflow:hidden}
svg{display:block;flex:none;overflow:visible}
i,em,kbd{font-style:normal;font-family:inherit}
.defs{position:absolute;width:0;height:0}
.k{fill:none;stroke:#555}
.o{fill:none;stroke:#ec8b45;stroke-width:var(--sw,1.300)}
.b{fill:none;stroke:#35a9cf;stroke-width:var(--sw,1.300)}
.bf{stroke:#35a9cf;stroke-width:var(--sw,1.400)}
.serif-a{font:34px "Liberation Serif",serif;letter-spacing:0;fill:#ef8425;stroke:#ef8425;stroke-width:.7}
.app{position:relative;width:1366px;height:744px;border-top:2px solid #aaa6a8;border-left:5px solid #aeabad;border-right:2px solid #111;display:flex;flex-direction:column;background:#fff;overflow:hidden}
.tri{display:inline-block;flex:none;width:0;height:0;border:2.500px solid transparent;border-top:3.500px solid #333;border-bottom:0}
.tri.bar{position:relative;margin-left:8px}
.tri.bar::before{content:"";position:absolute;left:-3px;top:-6px;width:6px;height:1px;background:#444}
.tri.up{border-top:0;border-bottom:3px solid #aaa}
.s16{width:16px;height:16px}

.titlebar{height:28px;flex:none;display:flex;align-items:center}
.quick{display:flex;align-items:center;width:770px;--sw:1.900}
.nx{font:bold 17px/22px "Liberation Sans",sans-serif;color:#8798ab;width:32px;margin-left:4px;letter-spacing:1px;border-right:1px solid #e5e5e5}
.q1{margin-left:8px;width:15px;height:15px}.q2{margin:0 6px 0 11px}.q3{margin-left:7px}.q4{margin-left:7px}.q5{margin-left:4px}.q6{margin:0 6px 0 7px}.q7{margin-left:12px}.q8{margin-left:9px}.q9{margin-left:4px}
.winlabel{margin:0 5px 0 2px;font-size:10.500px;width:39px}
.apptitle{font-size:10.500px;width:455px;padding-top:1px}
.brand{font:800 11.500px "Open Sans",sans-serif;color:#10909a;padding-top:3px;width:75px;letter-spacing:0}
.wctl{width:54px;height:16px}

.tabs{height:23px;flex:none;display:grid;grid-template-columns:50px 4px 57px 14px 97px 69px 48px 71px 55px 83px 82px 140px 90px 1fr 109px 62px 5px 17px 48px 14px 6px;margin-left:2px;background:#dbdbdb;align-items:center;font-size:11px;letter-spacing:-.1px;white-space:nowrap;color:#4d4c55}
.tabs .file{grid-column:1;background:#4a9abe;color:#fff;height:23px;line-height:23px;text-align:center}
.tabs .home{grid-column:3;background:#fff;color:#3883a8;height:23px;line-height:22px;text-align:center;border-top:1px solid #ccc}
.t1{grid-column:5}.t2{grid-column:6}.t3{grid-column:7}.t4{grid-column:8}.t5{grid-column:9}.t6{grid-column:10}.t7{grid-column:11}.t8{grid-column:12}
.t9{grid-column:13;padding-left:12px}
.find{grid-column:15;width:101px;height:17px;background:#fff;border:1px solid #bbb;display:flex;align-items:center;font-size:10px;color:#bcbcbc;padding-left:2px}
.find svg{width:16px;height:16px;margin-left:auto}
.tabicons{grid-column:16;width:62px;height:18px;margin-left:-1px}
.cap{grid-column:18;width:14px;height:12px;margin-left:-1px}
.tut{grid-column:19;font-size:10px;letter-spacing:-.2px}
.user{grid-column:20;width:12px;height:12px;border-radius:50%;background:#8b8b8b}

.ribbon{height:76px;flex:none;margin-left:3px;display:flex;border-bottom:1px solid #ddd;line-height:11px;white-space:nowrap}
.group{display:flex;flex-direction:column;height:76px;flex:none;background:linear-gradient(#e3e3e3,#e3e3e3) right 5px/1px 67px no-repeat}
.cmds{display:flex;height:61px;padding-top:5px}
.gl{position:relative;text-align:center;color:#3d83a8;padding-right:13px;height:14px;line-height:17px}
.gl .tri{position:absolute;right:7px;top:5px}
.g-sheet{width:52px}.g-view{width:258px}.g-dim{width:196px}.g-ann{width:407px}.g-sk{width:103px}.g-tab{width:87px}.g-disp{width:55px}
.g-sheet .cmd{width:50px}.g-sheet .gl{padding-right:15px}
.g-view .cmds{padding-left:2px}.g-dim .cmds{padding-left:7px}.g-dim .gl,.g-ann .gl{padding-right:0}
.cmd{display:flex;flex:none;flex-direction:column;align-items:center;text-align:center}
.cmd svg{width:29px;height:29px;margin-bottom:4px}
.cmd .tri{margin-left:3px;vertical-align:2px}
.w42{width:42px}.w41{width:41px}.w40{width:40px}.w36{width:36px}.w32{width:32px}.w39{width:39px}.w38{width:38px}.w50{width:50px}.w55{width:57px}
.stack{width:88px;padding:3px 0 0 4px;display:flex;flex-direction:column;gap:9px}
.stack div{display:flex;align-items:center;gap:4px;height:20px}
.stack svg{width:19px;height:17px}
.datum{width:70px;margin-left:123px}
.anngrid{display:grid;grid-template-columns:22px 26px 10px;grid-template-rows:22px 22px;row-gap:6px;column-gap:3px;margin-left:145px;padding-top:2px;align-items:center;justify-items:start}
.anngrid svg{width:22px;height:22px}
.skbox{width:79px;height:56px;margin-left:6px}
.skscroll{display:flex;flex-direction:column;justify-content:space-between;padding:8px 0 8px 5px;height:56px}
.skscroll .bar{margin-left:0}.skscroll .bar::before{top:-5px}
.g-tab .cmds{padding-left:5px}
.ribend{margin:66px 6px 0 auto}

.selbar{height:24px;flex:none;margin-left:3px;display:flex;align-items:center;border-bottom:1px solid #bbb}
.burger{width:10px;height:10px;margin-left:10px}
.menu{margin:0 5px 0 4px;width:25px;letter-spacing:0}
.combo{height:17px;border:1px solid #c4c4c4;display:flex;align-items:center;justify-content:space-between;padding:0 3px 0 2px;white-space:nowrap}
.combo .tri{border-width:3px;border-bottom:0;border-top:3.500px solid #222}
.c1{width:117px;margin-left:18px}.c2{width:121px;margin-left:8px}
.x1{margin:0 2px 0 8px}.x2{margin-left:8px}.x3{margin-left:5px}.x4{margin-left:7px}.x5{margin-left:6px}.x6{margin-left:6px}.x7{margin-left:4px}
.selend{margin:6px 6px 0 auto}

.main{flex:1;display:flex;margin-left:3px;min-height:0}
.resource{width:26px;background:#dcdcdc;display:flex;flex-direction:column;align-items:center;border-right:1px solid #c8c8c8;flex:none}
.resource svg{width:20px;height:20px;margin-left:2px}
.resource .r0{width:13px;height:13px;margin-top:5px;margin-left:-3px}
.r1{margin-top:25px}
.cur{width:26px;height:38px;background:#fff;margin-top:8px;display:flex;align-items:center;justify-content:center}
.r2{margin-top:7px}.r3{margin-top:14px}.r4{margin-top:17px}.r5{margin-top:16px}.r6{margin-top:27px}.r7{margin-top:26px}.r8{margin-top:16px}.r9{margin-top:25px}.r10{margin-top:17px}
.navigator{width:172px;flex:none;padding:0 8px 0 6px}
.navhead{display:flex;justify-content:space-between;align-items:center;height:24px;padding:2px 5px 0 3px}
.navhead i{width:10px;height:10px;border:1px solid #444;border-top-width:2px}
.tree{height:502px;border:1px solid #ddd;border-top:0;border-left-color:#eee}
.thead{height:18px;background:#efefef;padding-left:5px;line-height:20px;letter-spacing:0;display:flex;align-items:center;gap:13px}
.thead i{border:4px solid transparent;border-top:0;border-bottom:4px solid #333}
.rows{position:relative;height:467px;overflow:hidden;background:repeating-linear-gradient(#fff 0 16.050px,#eee 16.050px 17.050px,#fafafa 17.050px 33.100px,#eee 33.100px 34.100px)}
.row{height:17.050px;display:flex;align-items:center;white-space:nowrap;position:relative;z-index:1}
.row svg{width:14px;height:13px;margin-right:1px}
.row svg.ck,.row .ck{width:12px;height:12px;margin:0 1px 0 0}
.row em{width:9px;text-align:center;flex:none;line-height:9px;font-size:9px}
.d0{padding-left:4px}.d0 em{margin-right:5px}
.d1{padding-left:20px}.d1 em{margin-right:4px}.d2{padding-left:46px}.d2 em{display:none}.d2 svg.ck{margin-left:4px}
.row .q{color:#f4bb58;font:15px/13px "Noto Sans",sans-serif;text-align:center}
.row .fold{margin-left:-2px;margin-right:2px}
.ball{width:12px;height:12px;border-radius:50%;background:radial-gradient(circle at 35% 30%,#bff7b3,#2eae3b 60%,#17842a);margin-right:1px;flex:none}
.red{color:#ef655f;letter-spacing:-.1px}
.sel{background:#78aecb;flex:1;height:16px;line-height:16px}
.f span{color:#adadad}
.bold span{font-weight:bold;letter-spacing:-.3px}
.guides{position:absolute;left:0;top:0;width:158px;height:255px}
.scroll{height:13px;background:#efefef;display:flex;align-items:center;padding:0 3px}
.scroll svg{width:9px;height:8px}.scroll i{width:45px;height:13px;background:#c8c8c8;margin-left:3px}.scroll .rt{margin-left:auto}
.splitter{height:5px;background:#c4c4c4;border:1px solid #b2b2b2}
.acc{height:20.500px;border-bottom:1px solid #b6b6b6;font-size:11px;letter-spacing:-.1px;color:#397f9f;display:flex;align-items:center;justify-content:space-between;padding:0 4px 0 5px}
.acc svg{width:10px;height:8px}.acc path{fill:none;stroke:#357c9a;stroke-width:1.700}

.center{width:1125px;flex:none;display:flex;flex-direction:column;min-width:0}
.docs{height:20px;flex:none;border-bottom:3px solid #6497b3;display:flex;white-space:nowrap}
.doc{display:flex;align-items:center;height:17px}
.doc svg{width:14px;height:13px;margin-right:3px}
.doc .ed{width:9px;height:9px;margin:0 0 0 5px}.doc .cl{width:8px;height:8px;margin:0 0 0 6px}
.dd1{padding-left:6px;width:115px;letter-spacing:-.1px}.dd2{width:129px}.dd3{width:114px}
.dd4{width:140px;height:17px;background:#4d9abd;color:#fff;padding-left:4px}
.canvas{width:1125px;height:571px;overflow:hidden}
.drawtext{font:11.500px "Liberation Sans",sans-serif;letter-spacing:0;fill:#333}
.grid{font-size:16.500px}
.logo{font:700 39px "Open Sans",sans-serif;letter-spacing:0;fill:#000;stroke:#000;stroke-width:1.800}
.right{width:28px;border-left:1px solid #aaa;margin-top:19px;padding-left:5px;display:flex;flex-direction:column;gap:6.300px;flex:none;margin-left:-1px;--sw:1.600}
.right svg{width:21px;height:21px}
.right svg:first-child{margin-top:-8px}
.right hr{margin:0;border:0;border-top:1px solid #ddd;width:22px}

.ctx{position:absolute;left:706px;top:25px;width:146px;height:424px;background:#fff;border:1px solid #aaa;box-shadow:2px 2px 2px #777;padding:.750px 3px;--sw:2.100}
.mi{height:20.500px;display:flex;align-items:center;white-space:nowrap}
.mi svg{width:14px;height:14px;margin:0 5px 0 1px}
.mi kbd{margin-left:auto;margin-right:17px;letter-spacing:-.1px}
.mi b{margin:0 4px 0 auto;border:3px solid transparent;border-left:4px solid #222;border-right:0}
.mi u,.menu u{text-underline-offset:1px}
.on{background:linear-gradient(#b0cfe0,#b0cfe0) 0 1px/100% 18px no-repeat;font-weight:bold;letter-spacing:-.6px}
.ctx hr{margin:3px 6px 3.500px 8px;border:0;border-top:1px solid #ddd;height:1px}
.mini{position:absolute;left:706px;top:454px;width:170px;height:32px;background:#fff;border:1px solid #bbb;display:flex;align-items:center;padding-left:5px;gap:5px;--sw:1.700}
.mini svg{width:21px;height:21px}
.mini i{width:1px;height:22px;background:#ddd;margin:0 -2px 0 1px}
.callout{position:absolute;left:476px;top:39px;width:236px;height:122px;filter:drop-shadow(1px 1px 0 #77741a)}
.callout p{position:absolute;left:14px;top:13px;margin:0;color:#000;font:24px/34px "Liberation Sans","Noto Sans CJK TC",sans-serif;letter-spacing:1.300px;white-space:nowrap;-webkit-text-stroke:.6px #000}
.callout span{font-size:23px;-webkit-text-stroke:0}
.pointer{position:absolute;left:780px;top:69px;width:11px;height:17px}
```
